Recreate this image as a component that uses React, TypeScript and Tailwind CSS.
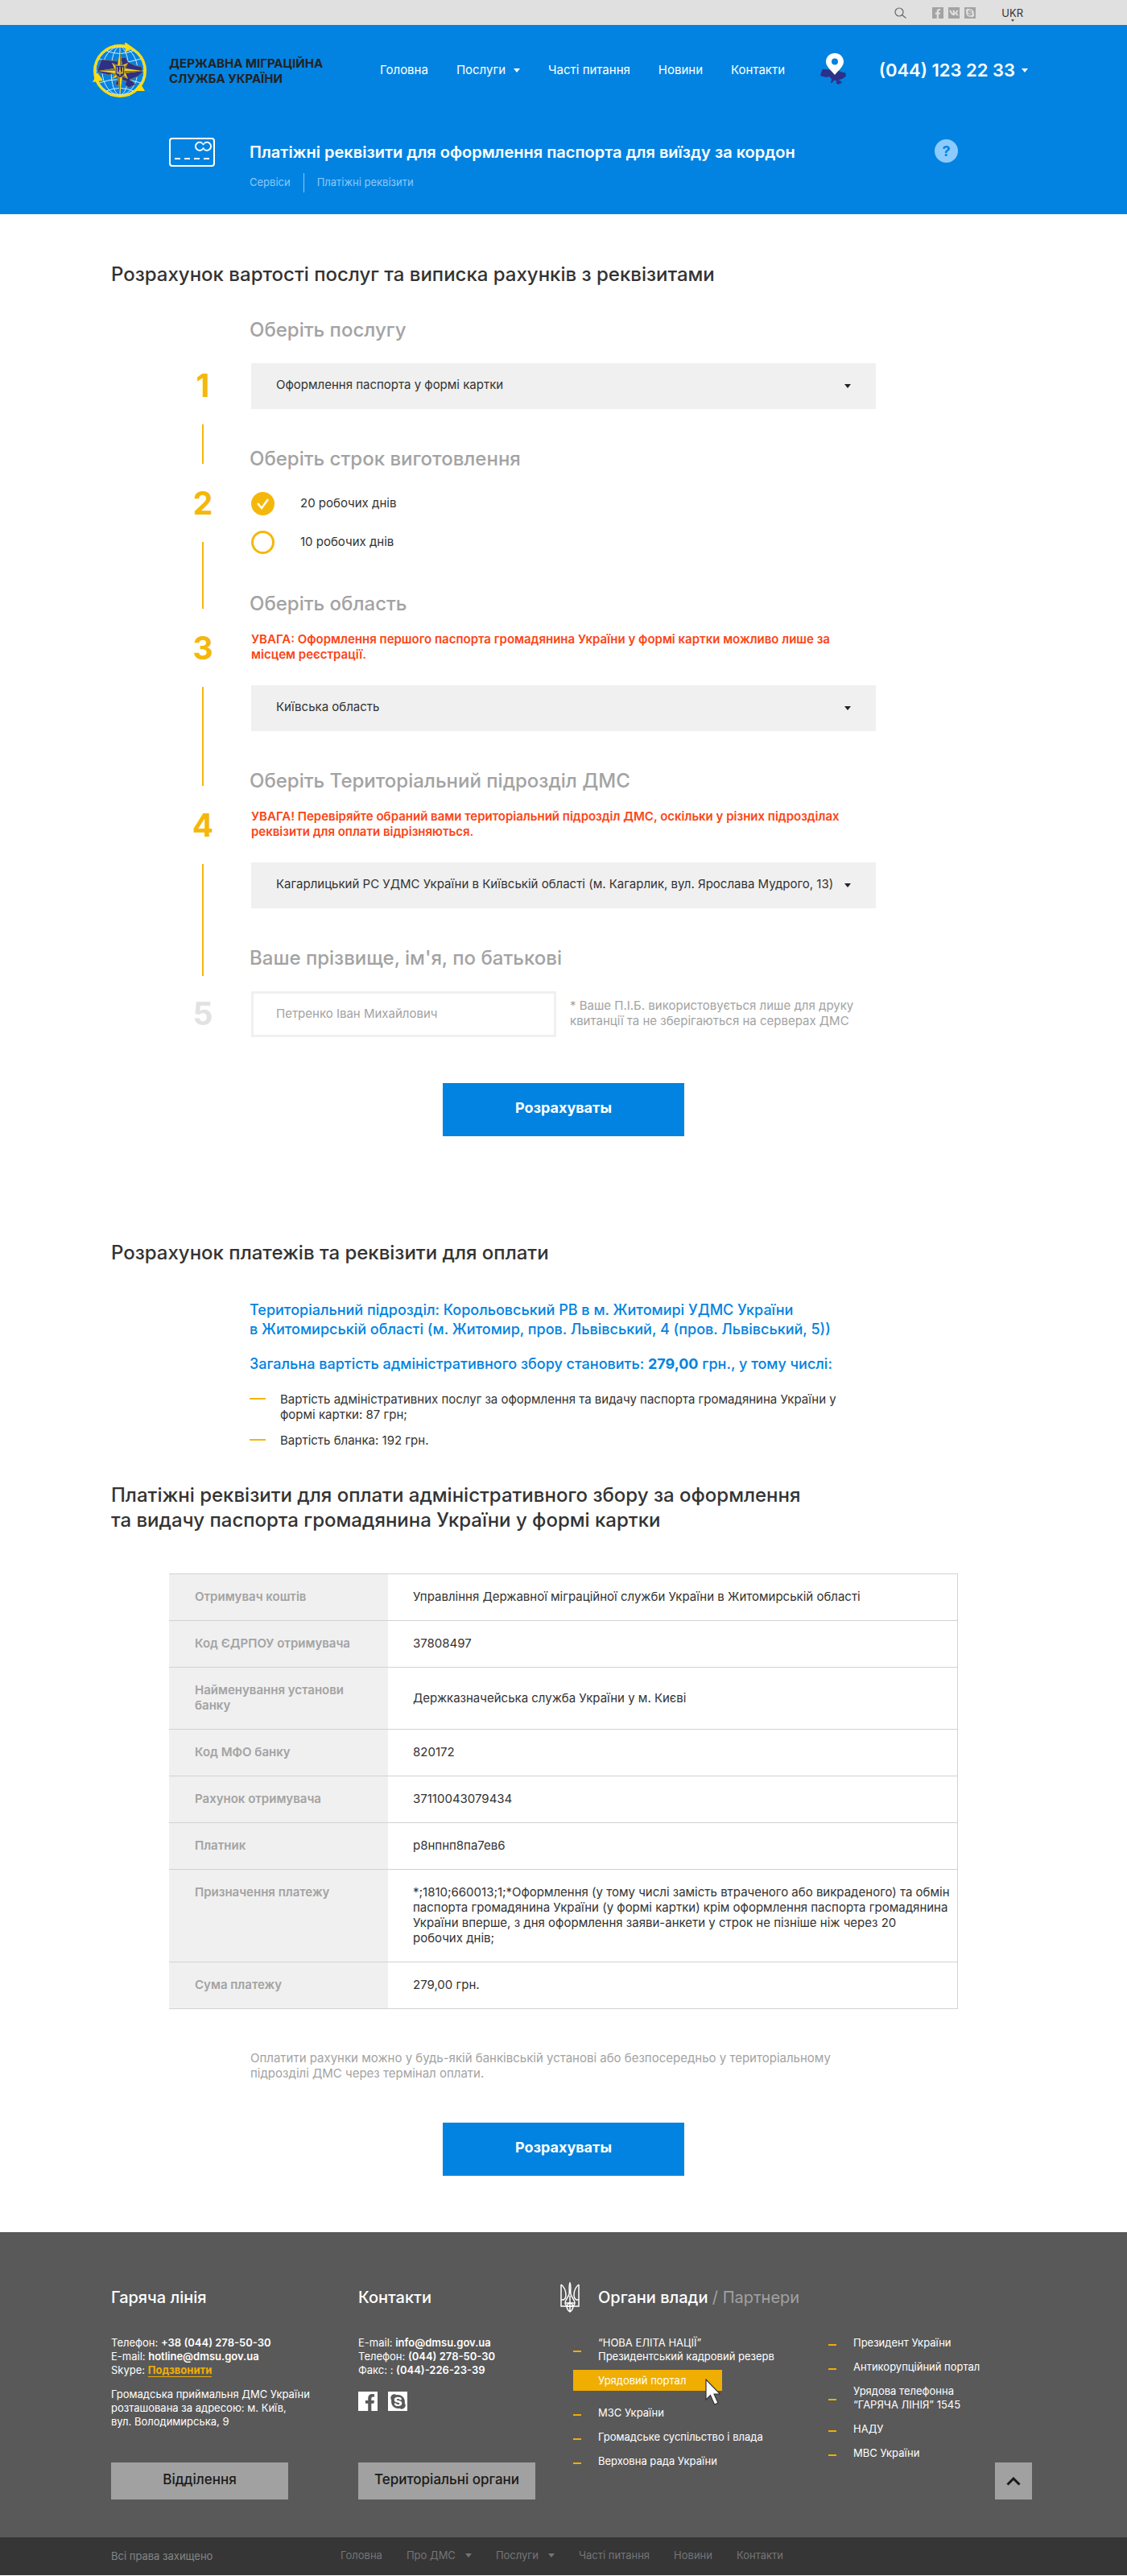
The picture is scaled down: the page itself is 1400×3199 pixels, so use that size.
import { useState } from 'react';
import type { ReactNode } from 'react';
import { FaFacebookF, FaSkype, FaVk } from 'react-icons/fa';

const UKRAINE =
  'M1 14L5 3l11 1 9 1 4-4 6-1 3 6 8 4 9 2 1 7-6 5-10 4 5 3 2 3-8 4-5-4 2-4-6-2-4 6-4 1 3-8-5-7-6 2-8-2-6-2z';

function Caret({ className }: { className: string }) {
  return (
    <svg viewBox="0 0 8 5" className={className} fill="currentColor" aria-hidden="true">
      <path d="M0 0h8L4 5z" />
    </svg>
  );
}

function Emblem() {
  return (
    <svg viewBox="10 7 68 69" className="h-[69px] w-[68px] shrink-0" aria-hidden="true">
      <g fill="none" stroke="#d5ecfb" strokeWidth="1">
        <circle cx="44" cy="42" r="30" />
        <ellipse cx="44" cy="42" rx="11" ry="30" />
        <ellipse cx="44" cy="42" rx="22" ry="30" />
        <path d="M44 12v60M14 42h60M18 27q26 9 52 0M18 57q26-9 52 0M27 17q17 7 34 0M27 67q17-7 34 0" />
      </g>
      <path d={UKRAINE} transform="translate(16 25)" fill="#2e2f86" stroke="#7d7a4c" strokeWidth=".8" />
      <circle cx="44" cy="42" r="31.500" fill="none" stroke="#ffdc0c" strokeWidth="3" />
      <path d="M50 6l10 7-9 6zM10 56l6-12 7 10zM75 67H61l8-10z" fill="#ffdc0c" />
      <path
        d="M44 17l3 18 7-3-3 7 21 3-21 3 3 7-7-3-3 23-3-23-7 3 3-7-20-3 20-3-3-7 7 3z"
        fill="#f6d21a"
      />
      <path
        d="M44 17v25l3-7zM54 32L44 42l7-3zM72 42H44l7 3zM54 52L44 42l3 7zM44 72V42l-3 7zM34 52l10-10-7 3zM17 42h27l-7-3zM34 32l10 10-3-7z"
        fill="#8d7b2c"
      />
      <path d="M38.500 35.500h11v10q0 3-5.500 5-5.500-2-5.500-5z" fill="#2e2f86" stroke="#c9a81c" strokeWidth=".7" />
      <path d="M40.500 37.500v7.500h7v-7.500M44 37v11M42 45l2-4 2 4" fill="none" stroke="#f6d21a" strokeWidth="1" />
    </svg>
  );
}

function MapPin() {
  return (
    <svg viewBox="0 0 32 39" className="h-[39px] w-8 shrink-0" aria-hidden="true">
      <path d={UKRAINE} transform="translate(0 18) scale(.57 .55)" fill="#2b3188" />
      <path
        fillRule="evenodd"
        fill="#fff"
        d="M18 0c6.200 0 11 4.700 11 10.500C29 16 24 20 18 27 12 20 7 16 7 10.500 7 4.700 11.800 0 18 0zm0 6.500a4 4 0 100 8 4 4 0 000-8z"
      />
    </svg>
  );
}

function CardIcon() {
  return (
    <svg viewBox="0 0 57 36" className="h-9 w-[57px]" fill="none" stroke="#fff" strokeWidth="2" aria-hidden="true">
      <rect x="1" y="1" width="55" height="34" rx="3" />
      <path d="M7 26h7M19 26h7M31 26h7M43 26h7" />
      <path d="M41 6.800a5 5 0 100 8M44 6.800a5 5 0 110 8" />
      <path d="M41 6.800q1.500 1 1.500 2.500M44 14.800q-1.500-1-1.500-2.500M44 6.800q-1.500 1-1.500 2.500M41 14.800q1.500-1 1.500-2.500" strokeWidth="1.500" />
    </svg>
  );
}

function Trident() {
  return (
    <svg viewBox="0 0 24 38" className="h-[38px] w-6 shrink-0" fill="none" stroke="#fff" strokeWidth="1.500" aria-hidden="true">
      <path d="M1 3v27h22V3M1 3c5 4 6 9 6 13 0 4-1 5-3 6h-3M23 3c-5 4-6 9-6 13 0 4 1 5 3 6h3" />
      <path d="M12 1c-2 5 0 9-1 14-1 4-5 7-5 11 0 3 3 5 6 4 3 1 6-1 6-4 0-4-4-7-5-11-1-5 1-9-1-14z" />
      <path d="M12 17v20M12 37c-3-2-4-5-4-8l4-4 4 4c0 3-1 6-4 8zM6 26h12" />
    </svg>
  );
}

function Select({ id, label, options }: { id: string; label: string; options: string[] }) {
  return (
    <div className="relative w-full max-w-[776px]">
      <select
        id={id}
        aria-label={label}
        className="h-[57px] w-full appearance-none bg-[#f0f0f0] pr-12 pb-0.5 pl-[31px] text-[15px] text-[#333] outline-none"
      >
        {options.map((o) => (
          <option key={o}>{o}</option>
        ))}
      </select>
      <Caret className="pointer-events-none absolute inset-y-0 right-[31px] my-auto h-[5px] w-2 text-[#222]" />
    </div>
  );
}

type StepProps = { n: number; title: string; top: string; tail?: string; height: string; children: ReactNode };

function Step({ n, title, top, tail, height, children }: StepProps) {
  return (
    <li className={`grid grid-cols-[60px_1fr] gap-[30px] ${height}`}>
      <div className={`flex flex-col items-center ${top}`}>
        <span className={`text-[39px] leading-7 font-bold ${tail ? 'text-[#f5b70a]' : 'text-[#e2e2e2]'}`}>{n}</span>
        {tail && <span className={`mt-[34px] w-0.5 flex-1 bg-[#f5b70a] ${tail}`} />}
      </div>
      <div>
        <h3 className="-ml-0.5 text-2xl leading-7 font-medium text-[#a3a3a3]">{title}</h3>
        {children}
      </div>
    </li>
  );
}

function Warning({ children }: { children: ReactNode }) {
  return (
    <p className="mt-5 mb-[29px] max-w-[750px] text-[15px] leading-[19px] font-semibold text-[#fb4516]">{children}</p>
  );
}

function Submit({ className }: { className: string }) {
  return (
    <div className={`flex justify-center ${className}`}>
      <button type="button" className="h-[66px] w-[300px] bg-[#0283e1] pb-1 text-lg font-bold text-white">
        Розрахуваты
      </button>
    </div>
  );
}

function Term({ label, checked, onChange }: { label: string; checked: boolean; onChange: () => void }) {
  return (
    <label className="flex h-[29px] w-fit items-center gap-8 text-[15px] text-[#333]">
      <span className="relative h-[29px] w-[29px]">
        <input
          type="radio"
          name="term"
          checked={checked}
          onChange={onChange}
          className="block h-[29px] w-[29px] appearance-none rounded-full border-[3px] border-[#f5b70a] checked:bg-[#f5b70a]"
        />
        {checked && (
          <svg viewBox="0 0 29 29" className="pointer-events-none absolute inset-0" fill="none" stroke="#fff" strokeWidth="2.500">
            <path d="M8 14l5 6 8-11" />
          </svg>
        )}
      </span>
      {label}
    </label>
  );
}

const details: [string, string][] = [
  ['Отримувач коштів', 'Управління Державної міграційної служби України в Житомирській області'],
  ['Код ЄДРПОУ отримувача', '37808497'],
  ['Найменування установи банку', 'Держказначейська служба України у м. Києві'],
  ['Код МФО банку', '820172'],
  ['Рахунок отримувача', '37110043079434'],
  ['Платник', 'р8нпнп8па7ев6'],
  [
    'Призначення платежу',
    '*;1810;660013;1;*Оформлення (у тому числі замість втраченого або викраденого) та обмін\nпаспорта громадянина України (у формі картки) крім оформлення паспорта громадянина\nУкраїни вперше, з дня оформлення заяви-анкети у строк не пізніше ніж через 20\nробочих днів;',
  ],
  ['Сума платежу', '279,00 грн.'],
];

function FooterLink({ children }: { children: ReactNode }) {
  return (
    <li className="flex items-center gap-[21px]">
      <span className="mt-1 h-0.5 w-2.5 shrink-0 bg-[#f0ae02]" />
      <a href="#">{children}</a>
    </li>
  );
}

export default function App() {
  const [term, setTerm] = useState(20);

  return (
    <div className="bg-white font-['Inter','Noto_Sans',sans-serif] text-[#333]">
      <div className="h-[31px] bg-[#e0e0e0]">
        <div className="mx-auto flex h-full max-w-[1170px] items-center justify-end pr-3.5">
          <button type="button" aria-label="Пошук" className="mr-8">
            <svg viewBox="0 0 15 14" className="h-3.5 w-[15px]" fill="none" stroke="#666" strokeWidth="1.200">
              <circle cx="6" cy="6" r="5" />
              <path d="M9.500 9.500l5 4" />
            </svg>
          </button>
          <div className="mr-8 flex gap-1.5 text-[#e0e0e0]">
            <a href="#" aria-label="Facebook" className="flex h-3.5 w-3.5 items-end justify-center bg-[#a3a3a3]">
              <FaFacebookF className="h-3 w-3" />
            </a>
            <a href="#" aria-label="VK" className="flex h-3.5 w-3.5 items-center justify-center bg-[#a3a3a3]">
              <FaVk className="h-3 w-3" />
            </a>
            <a href="#" aria-label="Skype" className="flex h-3.5 w-3.5 items-center justify-center bg-[#a3a3a3]">
              <FaSkype className="h-3 w-3" />
            </a>
          </div>
          <button type="button" className="relative text-[13px] leading-4 text-[#333]">
            UKR
            <Caret className="absolute inset-x-0 top-4 mx-auto h-[3px] w-1" />
          </button>
        </div>
      </div>

      <header className="bg-[#0283e1] text-white">
        <div className="mx-auto max-w-[1170px]">
          <div className="flex h-[113px] items-center">
            <a href="#" className="flex w-[357px] items-center gap-[27px] text-[15px] leading-[19px] font-bold text-[#222]">
              <Emblem />
              <span>
                ДЕРЖАВНА МІГРАЦІЙНА
                <br />
                СЛУЖБА УКРАЇНИ
              </span>
            </a>
            <nav className="flex items-center gap-[35px] text-[15px]">
              <a href="#">Головна</a>
              <a href="#" className="flex items-center gap-2.5">
                Послуги
                <Caret className="h-[5px] w-2" />
              </a>
              <a href="#">Часті питання</a>
              <a href="#">Новини</a>
              <a href="#">Контакти</a>
            </nav>
            <a href="#" aria-label="Карта підрозділів" className="ml-auto pb-1">
              <MapPin />
            </a>
            <button type="button" className="ml-[41px] flex items-center gap-2 pr-2 text-[22px] font-semibold">
              (044) 123 22 33
              <Caret className="h-[5px] w-2" />
            </button>
          </div>
          <div className="flex items-start px-[95px] py-[27px]">
            <CardIcon />
            <div className="ml-[43px] flex-1">
              <h1 className="flex h-9 items-center text-xl font-semibold">
                Платіжні реквізити для оформлення паспорта для виїзду за кордон
              </h1>
              <div className="mt-2 flex h-6 items-center gap-4 text-[13px] text-[#8ec8f8]">
                <a href="#">Сервіси</a>
                <span className="h-6 w-px bg-[#8ec8f8]" />
                <a href="#">Платіжні реквізити</a>
              </div>
            </div>
            <button
              type="button"
              className="mt-0.5 h-[29px] w-[29px] rounded-full bg-[#8ccbfd] text-lg font-bold text-[#0283e1]"
            >
              ?
            </button>
          </div>
        </div>
      </header>

      <main className="mx-auto max-w-[1170px] pt-[59px] pb-[70px]">
        <h2 className="pl-[23px] text-2xl leading-[31px] font-medium">
          Розрахунок вартості послуг та виписка рахунків з реквізитами
        </h2>

        <ol className="mt-10 pl-[107px]">
          <Step n={1} title="Оберіть послугу" top="pt-[69px]" tail="-mb-5" height="min-h-40">
            <div className="mt-[27px]">
              <Select id="service" label="Оберіть послугу" options={['Оформлення паспорта у формі картки']} />
            </div>
          </Step>
          <Step n={2} title="Оберіть строк виготовлення" top="pt-[55px]" tail="-mb-5" height="min-h-[180px]">
            <div className="mt-[27px] flex flex-col gap-[19px]">
              <Term label="20 робочих днів" checked={term === 20} onChange={() => setTerm(20)} />
              <Term label="10 робочих днів" checked={term === 10} onChange={() => setTerm(10)} />
            </div>
          </Step>
          <Step n={3} title="Оберіть область" top="pt-[55px]" tail="-mb-5" height="min-h-[220px]">
            <Warning>
              УВАГА: Оформлення першого паспорта громадянина України у формі картки можливо лише за місцем реєстрації.
            </Warning>
            <Select id="region" label="Оберіть область" options={['Київська область']} />
          </Step>
          <Step n={4} title="Оберіть Територіальний підрозділ ДМС" top="pt-[55px]" tail="-mb-9" height="min-h-[220px]">
            <Warning>
              УВАГА! Перевіряйте обраний вами територіальний підрозділ ДМС, оскільки у різних підрозділах реквізити для
              оплати відрізняються.
            </Warning>
            <Select
              id="office"
              label="Оберіть Територіальний підрозділ ДМС"
              options={['Кагарлицький РС УДМС України в Київській області (м. Кагарлик, вул. Ярослава Мудрого, 13)']}
            />
          </Step>
          <Step n={5} title="Ваше прізвище, ім'я, по батькові" top="pt-[69px]" height="">
            <div className="mt-[27px] flex items-center gap-[17px]">
              <input
                type="text"
                aria-label="Ваше прізвище, ім'я, по батькові"
                placeholder="Петренко Іван Михайлович"
                className="h-[57px] w-[379px] border-[3px] border-[#f0f0f0] px-7 pb-0.5 text-[15px] outline-none placeholder:text-[#a3a3a3]"
              />
              <p className="pb-1 text-[15px] leading-[19px] text-[#a3a3a3]">
                * Ваше П.І.Б. використовується лише для друку
                <br />
                квитанції та не зберігаються на серверах ДМС
              </p>
            </div>
          </Step>
        </ol>
        <Submit className="mt-[57px]" />

        <h2 className="mt-[129px] pl-[23px] text-2xl leading-[31px] font-medium">
          Розрахунок платежів та реквізити для оплати
        </h2>
        <div className="mt-11 max-w-[960px] pl-[195px]">
          <p className="text-lg leading-6 font-medium text-[#0283e1]">
            Територіальний підрозділ: Корольовський РВ в м. Житомирі УДМС України
            <br />в Житомирській області (м. Житомир, пров. Львівський, 4 (пров. Львівський, 5))
          </p>
          <p className="mt-[19px] text-lg leading-6 font-medium text-[#0283e1]">
            Загальна вартість адміністративного збору становить: <b>279,00</b> грн., у тому числі:
          </p>
          <ul className="mt-[22px] flex flex-col gap-[13px] text-[15px] leading-[19px]">
            <li className="flex gap-[18px]">
              <span className="mt-2 h-0.5 w-5 shrink-0 bg-[#f5b70a]" />
              <span>
                Вартість адміністративних послуг за оформлення та видачу паспорта громадянина України у
                <br />
                формі картки: 87 грн;
              </span>
            </li>
            <li className="flex gap-[18px]">
              <span className="mt-2 h-0.5 w-5 shrink-0 bg-[#f5b70a]" />
              <span>Вартість бланка: 192 грн.</span>
            </li>
          </ul>
        </div>

        <h2 className="mt-[43px] pl-[23px] text-2xl leading-[31px] font-medium">
          Платіжні реквізити для оплати адміністративного збору за оформлення
          <br />
          та видачу паспорта громадянина України у формі картки
        </h2>
        <div className="mt-[51px] px-[95px]">
          <table className="w-full border-collapse border-t border-r border-[#d2d2d2] text-[15px] leading-[19px]">
            <tbody>
              {details.map(([k, v]) => (
                <tr key={k} className="border-b border-[#d2d2d2]">
                  <th
                    scope="row"
                    className="w-[272px] bg-[#f0f0f0] pt-[18px] pr-10 pb-5 pl-8 text-left align-top font-semibold text-[#a3a3a3]"
                  >
                    {k}
                  </th>
                  <td className="pt-[18px] pb-5 pl-[31px] whitespace-pre-line">{v}</td>
                </tr>
              ))}
            </tbody>
          </table>
        </div>
        <p className="mt-[51px] pl-[196px] text-[15px] leading-[19px] text-[#a3a3a3]">
          Оплатити рахунки можно у будь-якій банківській установі або безпосередньо у територіальному
          <br />
          підрозділі ДМС через термінал оплати.
        </p>
        <Submit className="mt-[52px]" />
      </main>

      <footer>
        <div className="bg-[#595959] text-[13px] leading-[17px] text-white">
          <div className="mx-auto flex min-h-[379px] max-w-[1170px] pt-[67px] pr-[3px] pb-[47px] pl-[23px]">
            <section className="flex w-[307px] flex-col items-start">
              <h3 className="text-xl leading-7 font-medium">Гаряча лінія</h3>
              <p className="mt-[34px]">
                Телефон: <b className="font-semibold">+38 (044) 278-50-30</b>
                <br />
                E-mail: <b className="font-semibold">hotline@dmsu.gov.ua</b>
                <br />
                Skype:{' '}
                <a href="#" className="border-b border-[#f0ae02] font-bold text-[#f0ae02]">
                  Подзвонити
                </a>
              </p>
              <p className="mt-[13px]">
                Громадська приймальня ДМС України
                <br />
                розташована за адресою: м. Київ,
                <br />
                вул. Володимирська, 9
              </p>
              <button
                type="button"
                className="mt-auto h-[46px] w-[220px] bg-[#a1a1a1] pb-1 text-[17px] font-medium text-[#1a1a1a]"
              >
                Відділення
              </button>
            </section>
            <section className="flex w-[251px] flex-col items-start">
              <h3 className="text-xl leading-7 font-medium">Контакти</h3>
              <p className="mt-[34px]">
                E-mail: <b className="font-semibold">info@dmsu.gov.ua</b>
                <br />
                Телефон: <b className="font-semibold">(044) 278-50-30</b>
                <br />
                Факс: : <b className="font-semibold">(044)-226-23-39</b>
              </p>
              <div className="mt-[18px] flex gap-[13px] text-[#595959]">
                <a href="#" aria-label="Facebook" className="flex h-6 w-6 items-end justify-end bg-white pr-0.5">
                  <FaFacebookF className="h-[21px] w-[15px]" />
                </a>
                <a href="#" aria-label="Skype" className="flex h-6 w-6 items-center justify-center bg-white">
                  <FaSkype className="h-[21px] w-[21px]" />
                </a>
              </div>
              <button
                type="button"
                className="mt-auto h-[46px] w-[220px] bg-[#a1a1a1] pb-1 text-[17px] font-medium text-[#1a1a1a]"
              >
                Територіальні органи
              </button>
            </section>
            <section className="flex-1">
              <div className="flex h-7 items-center gap-[23px]">
                <Trident />
                <h3 className="text-xl leading-7 font-medium">
                  Органи влади <span className="font-normal text-[#a1a1a1]">/ Партнери</span>
                </h3>
              </div>
              <div className="mt-[34px] flex pl-4">
                <ul className="w-[317px]">
                  <FooterLink>
                    “НОВА ЕЛІТА НАЦІЇ”
                    <br />
                    Президентський кадровий резерв
                  </FooterLink>
                  <li className="relative mt-2 mb-[19px] w-[185px] bg-[#f0ae02]">
                    <a href="#" className="flex h-[26px] items-center pl-[31px]">
                      Урядовий портал
                    </a>
                    <svg viewBox="0 0 19 33" className="absolute top-[11px] left-[164px] h-[33px] w-[19px]" aria-hidden="true">
                      <path
                        d="M1 1v25l5.500-5.500 5 11.500 4.500-2-5-11h7.500z"
                        fill="#fff"
                        stroke="#333"
                        strokeWidth="1.200"
                      />
                    </svg>
                  </li>
                  <li>
                    <ul className="flex flex-col gap-[13px]">
                      <FooterLink>МЗС України</FooterLink>
                      <FooterLink>Громадське суспільство і влада</FooterLink>
                      <FooterLink>Верховна рада України</FooterLink>
                    </ul>
                  </li>
                </ul>
                <ul className="flex flex-col gap-[13px]">
                  <FooterLink>Президент України</FooterLink>
                  <FooterLink>Антикорупційний портал</FooterLink>
                  <FooterLink>
                    Урядова телефонна
                    <br />
                    “ГАРЯЧА ЛІНІЯ” 1545
                  </FooterLink>
                  <FooterLink>НАДУ</FooterLink>
                  <FooterLink>МВС України</FooterLink>
                </ul>
              </div>
            </section>
            <a href="#" aria-label="Вгору" className="flex h-[46px] w-[46px] items-center justify-center self-end bg-[#a1a1a1]">
              <svg viewBox="0 0 18 11" className="h-[11px] w-[18px]" fill="none" stroke="#1a1a1a" strokeWidth="3">
                <path d="M1.500 9.500L9 2l7.500 7.500" />
              </svg>
            </a>
          </div>
        </div>
        <div className="bg-[#363636]">
          <div className="mx-auto flex h-[47px] max-w-[1170px] items-center pl-[23px] text-[13px] text-[#757575]">
            <p className="w-[285px] text-[#858585]">Всі права захищено</p>
            <nav className="flex items-center gap-[30px] pb-0.5">
              <a href="#">Головна</a>
              <a href="#" className="flex items-center gap-3">
                Про ДМС
                <Caret className="h-[5px] w-2" />
              </a>
              <a href="#" className="flex items-center gap-3">
                Послуги
                <Caret className="h-[5px] w-2" />
              </a>
              <a href="#">Часті питання</a>
              <a href="#">Новини</a>
              <a href="#">Контакти</a>
            </nav>
          </div>
        </div>
      </footer>
    </div>
  );
}
